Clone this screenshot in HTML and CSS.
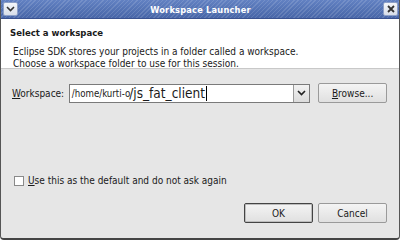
FILE: index.html
```html
<!DOCTYPE html>
<html lang="en">
<head>
  <meta charset="UTF-8" />
  <title>Workspace Launcher</title>
  <link rel="stylesheet" href="styles.css">
</head>
<body>
  <div class="window">
    <div class="titlebar">
      <span class="tb-btn">
        <svg width="9" height="6" viewBox="0 0 9 6"><path d="M1 1 L4.5 4.5 L8 1" fill="none" stroke="#333" stroke-width="1.6"/></svg>
      </span>
      <span class="tb-title">Workspace Launcher</span>
      <span class="tb-btn">
        <svg width="8" height="8" viewBox="0 0 8 8"><path d="M1 1 L7 7 M7 1 L1 7" fill="none" stroke="#333" stroke-width="1.8"/></svg>
      </span>
    </div>

    <div class="header">
      <div class="header-title">Select a workspace</div>
      <div class="header-text">Eclipse SDK stores your projects in a folder called a workspace.<br>Choose a workspace folder to use for this session.</div>
    </div>

    <div class="content">
      <div class="ws-row">
        <span class="ws-label"><u>W</u>orkspace:</span>
        <div class="combo">
          <div class="combo-input"><span class="path-small">/home/kurti-o</span><span class="path-big">/js_fat_client</span><span class="caret"></span></div>
          <div class="combo-arrow">
            <svg width="9" height="6" viewBox="0 0 9 6"><path d="M1 1 L4.5 4.5 L8 1" fill="none" stroke="#222" stroke-width="1.6"/></svg>
          </div>
        </div>
        <button class="btn browse"><u>B</u>rowse...</button>
      </div>

      <div class="check-row">
        <span class="checkbox"></span>
        <span class="check-text"><u>U</u>se this as the default and do not ask again</span>
      </div>

      <div class="buttons">
        <button class="btn ok">OK</button>
        <button class="btn">Cancel</button>
      </div>
    </div>
  </div>
</body>
</html>
```

FILE: styles.css
```css
body {
  margin: 0;
  font-family: "DejaVu Sans Condensed", "DejaVu Sans", sans-serif;
  font-stretch: condensed;
  font-size: 10px;
  color: #1a1a1a;
  background: #fff;
}

.window {
  width: 400px;
  height: 240px;
  box-sizing: border-box;
  display: flex;
  flex-direction: column;
  background: #e6e6e6;
  border-left: 1px solid #555;
  border-right: 1px solid #555;
  border-bottom: 2px solid #444;
  border-radius: 0 0 4px 4px;
}

.titlebar {
  height: 18px;
  display: flex;
  align-items: center;
  justify-content: space-between;
  padding: 0 1px 0 2px;
  background:
    repeating-linear-gradient(135deg, rgba(255,255,255,0.13) 0 1px, transparent 1px 3px),
    linear-gradient(#6281c2, #4866a8);
  border-bottom: 1px solid #3a5290;
}

.tb-btn {
  width: 15px;
  height: 14px;
  box-sizing: border-box;
  border: 1px solid #8da0c8;
  border-radius: 2px;
  background: linear-gradient(#f4f6fa, #d8dee9);
  display: flex;
  align-items: center;
  justify-content: center;
}

.tb-title {
  color: #fff;
  font-weight: bold;
  font-size: 9.2px;
  letter-spacing: 0.2px;
}

.header {
  background: #fff;
  height: 50px;
  padding: 8px 8px 0 9px;
  border-bottom: 1px solid #c8c8c8;
  box-sizing: border-box;
}

.header-title {
  font-weight: bold;
  font-size: 9.5px;
  margin-bottom: 8px;
}

.header-text {
  padding-left: 3px;
  line-height: 12px;
}

.content {
  flex: 1;
  display: flex;
  flex-direction: column;
  padding: 14px 12px 0 11px;
}

.ws-row {
  display: flex;
  align-items: center;
  height: 20px;
}

.ws-label {
  width: 57px;
}

.combo {
  display: flex;
  height: 19px;
  width: 242px;
  border: 1px solid #7a7a7a;
  box-sizing: border-box;
}

.combo-input {
  flex: 1;
  background: #fff;
  display: flex;
  align-items: center;
  padding-left: 2px;
  overflow: hidden;
  white-space: nowrap;
}

.path-small {
  font-size: 9.6px;
}

.path-big {
  font-size: 13.5px;
  line-height: 17px;
  margin-left: -1px;
}

.caret {
  display: inline-block;
  width: 1px;
  height: 15px;
  background: #000;
  margin-left: 1px;
}

.combo-arrow {
  width: 15px;
  border-left: 1px solid #9a9a9a;
  background: linear-gradient(#f2f2f2, #dcdcdc);
  display: flex;
  align-items: center;
  justify-content: center;
}

.btn {
  font-family: inherit;
  font-stretch: condensed;
  font-size: 10px;
  color: #1a1a1a;
  width: 69px;
  height: 20px;
  padding: 0;
  border: 1px solid #9a9a9a;
  border-radius: 2px;
  background: linear-gradient(#f4f4f4, #e0e0e0);
}

.browse {
  margin-left: 8px;
}

.check-row {
  display: flex;
  align-items: center;
  margin-top: 72px;
  padding-left: 2px;
}

.checkbox {
  width: 8px;
  height: 8px;
  margin-right: 4px;
  border: 1px solid #8a8a8a;
  background: #fff;
}

.buttons {
  display: flex;
  justify-content: flex-end;
  gap: 5px;
  margin-top: 17px;
}

.ok {
  border-color: #444;
  box-shadow: inset 0 0 0 1px #bdbdbd;
}
```
